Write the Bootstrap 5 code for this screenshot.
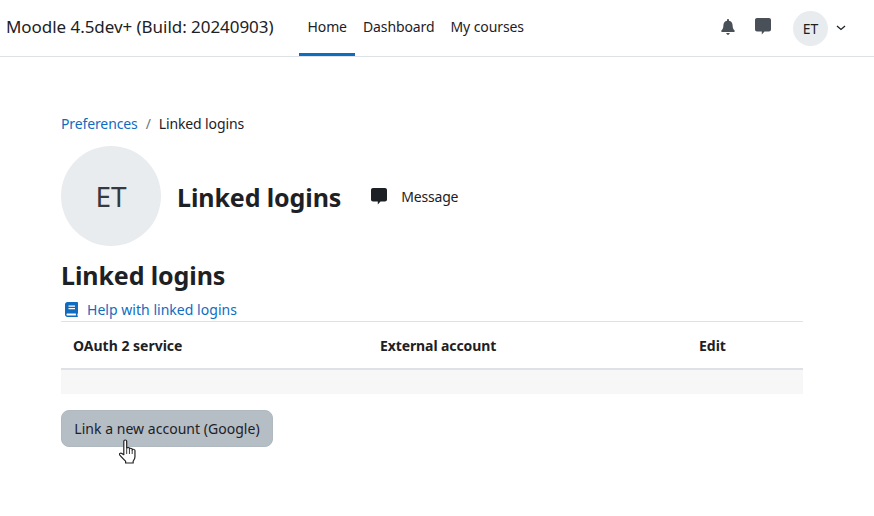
<!DOCTYPE html>
<html lang="en">
<head>
<meta charset="utf-8">
<title>Linked logins</title>
<link href="https://cdn.jsdelivr.net/npm/bootstrap@5.3.0/dist/css/bootstrap.min.css" rel="stylesheet">
<style>
html,body{height:516px;overflow:hidden}
body{font-family:"Noto Sans","Open Sans",sans-serif;font-size:14px;color:#1d2125;background:#fff}
.topbar{height:57px;border-bottom:1px solid #dee2e6;padding:0 28px 0 6px}
.brandname{font-size:17px;color:#1d2125;margin-right:26px;letter-spacing:-.05px;white-space:nowrap;margin-top:-2px}
.topnav{height:56px}
.topnav a{color:#1d2125;text-decoration:none;padding:0 8px;height:56px;display:flex;align-items:center;letter-spacing:-.1px;border-bottom:3px solid transparent}
.topnav a.on{border-bottom-color:#0f6cbf}
.ticon{fill:#495057;display:block}
.tools{margin-top:-3px}
.tools .gapb{margin-left:20px}
.tools .gapa{margin-left:22px}
.avatar-sm{width:35px;height:35px;border-radius:50%;background:#e9ecef;font-size:14px;margin-top:3px}
.chev{margin-top:3px;margin-left:8px}
.pagewrap{padding:56px 71px 0 61px}
.crumbs{height:20px;margin-bottom:13px;letter-spacing:-.12px}
.crumbs a,.helplink{color:#0f6cbf;text-decoration:none}
.avatar-lg{width:100px;height:100px;border-radius:50%;background:#e9ecef;font-size:28px;color:#343a40}
.h-title{font-size:25px;font-weight:700;letter-spacing:-.1px;margin:2px 0 0 16px}
.h-sub{font-size:25px;font-weight:700;letter-spacing:-.1px;margin:13px 0 0;line-height:32px}
.msg{margin-left:30px;gap:14px;letter-spacing:-.2px}
.helprow{height:23px;margin-top:7px;gap:9px;letter-spacing:.03px}
.tbl{border-top:1px solid #dee2e6;font-weight:700}
.tbl-head{height:48px;border-bottom:2px solid #dee2e6;padding-left:12px}
.tbl-strip{height:24px;background:#f7f7f7}
.col-a{width:307px}.col-b{width:319px;letter-spacing:-.1px}
.linkbtn{margin-top:16px;background:#b5bdc5;border:1px solid #b0b8c0;border-radius:8px;height:37px;width:212px;padding:0;color:#1d2125;font-size:14px;letter-spacing:.03px}
.btnwrap{position:relative}
.pointer{position:absolute;left:58px;top:45px}
</style>
</head>
<body>
<nav class="topbar d-flex align-items-center">
  <span class="brandname">Moodle 4.5dev+ (Build: 20240903)</span>
  <div class="topnav d-flex">
    <a class="on" href="#">Home</a>
    <a href="#">Dashboard</a>
    <a href="#">My courses</a>
  </div>
  <div class="tools d-flex align-items-center ms-auto">
    <svg class="ticon" width="14" height="16" viewBox="0 0 14 16"><path d="M7 0c.6 0 1 .5 1 1v.7c2.2.5 3.6 2.300 3.600 4.500 0 3.400 1.100 4.300 2 5.300.3.400.2 1.500-.6 1.500H1c-.8 0-.9-1.100-.6-1.500.9-1 2-1.900 2-5.300 0-2.200 1.400-4 3.600-4.500V1c0-.5.4-1 1-1zM5.300 14h3.400c0 1-.8 1.800-1.700 1.800S5.300 15 5.300 14z"/></svg>
    <svg class="ticon gapb" width="16" height="17" viewBox="0 0 16 17"><path d="M2 0h12c1.100 0 2 .9 2 2v9.500c0 1.100-.9 2-2 2H9.500L6.800 16.500V13.500H2c-1.100 0-2-.9-2-2V2C0 .9.900 0 2 0z"/></svg>
    <div class="avatar-sm d-flex align-items-center justify-content-center gapa">ET</div>
    <svg class="chev" width="10" height="6" viewBox="0 0 10 6"><path d="M1 1l4 3.500L9 1" fill="none" stroke="#1d2125" stroke-width="1.300"/></svg>
  </div>
</nav>
<main class="pagewrap">
  <div class="crumbs d-flex align-items-center gap-2"><a href="#">Preferences</a><span class="text-secondary">/</span><span>Linked logins</span></div>
  <div class="d-flex align-items-center">
    <div class="avatar-lg d-flex align-items-center justify-content-center flex-shrink-0">ET</div>
    <h2 class="h-title">Linked logins</h2>
    <div class="msg d-flex align-items-center">
      <svg width="16" height="17" viewBox="0 0 16 17"><path fill="#1d2125" d="M2 0h12c1.100 0 2 .9 2 2v9.500c0 1.100-.9 2-2 2H9.500L6.800 16.500V13.500H2c-1.100 0-2-.9-2-2V2C0 .9.900 0 2 0z"/></svg>
      <span>Message</span>
    </div>
  </div>
  <h3 class="h-sub">Linked logins</h3>
  <div class="helprow d-flex align-items-center">
    <svg class="ms-1" width="13" height="15" viewBox="0 0 13 15"><path fill="#0f6cbf" d="M2.500 0H12c.6 0 1 .4 1 1v10c0 .4-.3.8-.6.900v1.600c.4.100.6.400.6.700 0 .4-.4.800-.8.800H2.500C1.100 15 0 13.900 0 12.500v-10C0 1.100 1.100 0 2.500 0zM2.500 11.500c-.6 0-1 .4-1 1s.4 1 1 1h8.400v-2z"/><path fill="#fff" d="M3.500 3.500h6.500v1.200H3.500zM3.500 6h6.500v1.200H3.500z"/></svg>
    <a class="helplink" href="#">Help with linked logins</a>
  </div>
  <div class="tbl">
    <div class="tbl-head d-flex align-items-center"><div class="col-a">OAuth 2 service</div><div class="col-b">External account</div><div>Edit</div></div>
    <div class="tbl-strip"></div>
  </div>
  <div class="btnwrap">
    <button class="btn linkbtn" type="button">Link a new account (Google)</button>
    <svg class="pointer" width="18" height="25" viewBox="1 0 15 25" preserveAspectRatio="none"><path fill="#fff" stroke="#222" stroke-width="1" stroke-linejoin="round" d="M5 2.300c0-1.600 2.400-1.600 2.400 0v7c.2-1.200 2.300-1.200 2.300 0v.8c.2-1.100 2.300-1 2.300.2v.7c.3-1 2.300-.8 2.300.4v6.400c0 2.300-1 3.400-1.500 4.400v1.900H6.500v-1.900c-1-1.300-3.500-4-4.900-6.200-.7-1.200.6-2.500 1.800-1.500l1.600 1.300z"/><path stroke="#222" stroke-width=".8" d="M7.400 9.500v5.500M9.700 10.200v4.800M12 11v4"/></svg>
  </div>
</main>
<script src="https://cdn.jsdelivr.net/npm/bootstrap@5.3.0/dist/js/bootstrap.bundle.min.js"></script>
</body>
</html>
